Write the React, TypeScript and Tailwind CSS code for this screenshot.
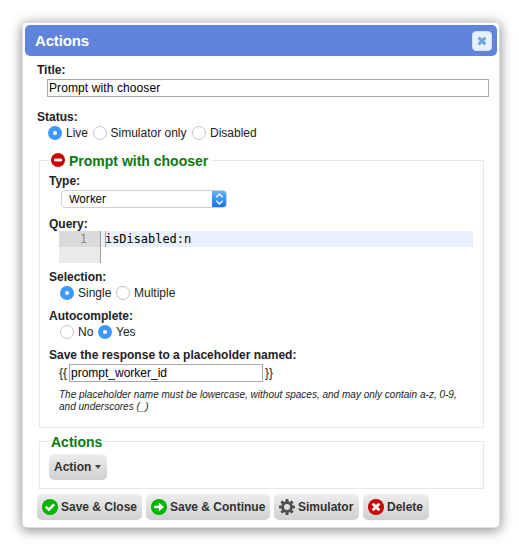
import React from "react";

function Radio({ label, checked = false, className = "" }: { label: string; checked?: boolean; className?: string }) {
  return (
    <label className={`flex h-4 items-center ${className}`}>
      <span
        className={
          checked
            ? "flex size-[14px] shrink-0 items-center justify-center rounded-full bg-[#3b99fc]"
            : "size-[14px] shrink-0 rounded-full border border-[#c4c4c4] bg-white"
        }
      >
        {checked && <span className="size-1 rounded-full bg-white" />}
      </span>
      <span className="ml-[4px]">{label}</span>
    </label>
  );
}

function Label({ children }: { children: React.ReactNode }) {
  return <div className="h-4 font-bold text-[#222]">{children}</div>;
}

function Button({ icon, children, className }: { icon?: React.ReactNode; children: React.ReactNode; className: string }) {
  return (
    <button
      className={`flex h-[26px] shrink-0 items-center rounded-[5px] bg-linear-to-b from-[#ededed] to-[#d0d0d0] pl-[5px] font-bold text-[#333] ${className}`}
    >
      {icon}
      {children}
    </button>
  );
}

const teeth = [0, 45, 90, 135, 180, 225, 270, 315];

function CheckIcon() {
  return (
    <svg className="mr-[3px] size-4 shrink-0" viewBox="0 0 16 16" fill="none">
      <circle cx="8" cy="8" r="8" fill="#00b400" />
      <path d="M3.7 7.7 6.9 10.7l5.3-5.4" stroke="white" strokeWidth="2.5" />
    </svg>
  );
}

function ArrowIcon() {
  return (
    <svg className="mr-[3px] size-4 shrink-0" viewBox="0 0 16 16">
      <circle cx="8" cy="8" r="8" fill="#00b400" />
      <path d="M3.2 6.7H7.8V3.5L13 8l-5.2 4.5V9.3H3.2z" fill="white" />
    </svg>
  );
}

function GearIcon() {
  return (
    <svg className="mr-[3px] size-4 shrink-0" viewBox="0 0 16 16">
      {teeth.map((a) => (
        <path key={a} d="M6.7 0h2.6l.5 3.5H6.2z" fill="#505050" transform={`rotate(${a} 8 8)`} />
      ))}
      <circle cx="8" cy="8" r="4.4" fill="none" stroke="#505050" strokeWidth="2.6" />
    </svg>
  );
}

function DeleteIcon() {
  return (
    <svg className="mr-[3px] size-4 shrink-0" viewBox="0 0 16 16">
      <circle cx="8" cy="8" r="8" fill="#cc0000" />
      <path d="m4.7 4.7 6.6 6.6m0-6.6-6.6 6.6" stroke="white" strokeWidth="2.8" />
    </svg>
  );
}

export default function App() {
  return (
    <div className="h-[553px] w-[519px] overflow-hidden bg-white pl-[23px] pt-[23px] font-['Liberation_Sans',Arial,sans-serif] text-[12px] leading-4 whitespace-nowrap text-[#222]">
      <div className="h-[504px] w-[476px] rounded-[4px] bg-white p-[2px] shadow-[0_0_0_1px_#dedede,0_2px_12px_2px_rgba(0,0,0,0.42)]">
        <header className="flex h-[31px] items-center justify-between rounded-[5px] bg-[#6083dc] pr-[5px] pl-[10px]">
          <h1 className="mt-[1px] text-[15px] font-bold tracking-[-0.15px] text-white">Actions</h1>
          <button className="flex size-[20px] items-center justify-center rounded-[4px] border border-[#cfe0fa] bg-[#e7f1fd]">
            <svg className="size-[10px]" viewBox="0 0 10 10">
              <path d="m1.6 1.6 6.8 6.8m0-6.8-6.8 6.8" stroke="#71a7d8" strokeWidth="2.9" />
            </svg>
          </button>
        </header>

        <div className="px-3 pt-[6px]">
          <Label>Title:</Label>
          <div className="mt-[1px] ml-[10px] flex h-[18px] w-[442px] items-center border border-[#a9a9a9] pl-px text-black">
            <span className="tracking-[0.1px]">Prompt with chooser</span>
          </div>
          <div className="mt-[12px]">
            <Label>Status:</Label>
          </div>
          <div className="flex pl-[11px]">
            <Radio label="Live" checked className="w-[44.5px]" />
            <Radio label="Simulator only" className="w-[99.5px]" />
            <Radio label="Disabled" />
          </div>

          <section className="mt-[19px] ml-[2px] h-[268px] w-[445px] border border-[#e8e8e8] pl-[9px]">
            <h2 className="-mt-[9px] flex h-4 w-[162px] items-center bg-white pl-[2px] text-[14px] font-bold text-[#0b7a0b]">
              <svg className="mr-[4px] size-[14px] shrink-0" viewBox="0 0 14 14">
                <circle cx="7" cy="7" r="7" fill="#cc0000" />
                <path d="M3 5.6h8v2.8H3z" fill="white" />
              </svg>
              <span className="pt-[2px]">Prompt with chooser</span>
            </h2>
            <div className="mt-[5px]">
              <Label>Type:</Label>
            </div>
            <div className="mt-[1px] ml-[12px] flex h-[18px] w-[166px] items-center justify-between overflow-hidden rounded-[4px] border border-[#d0d0d0] bg-white">
              <span className="pl-[7px] font-[Inter,sans-serif] text-[11px] tracking-[-0.1px] text-black">Worker</span>
              <svg className="-mr-px h-[18px] w-[15px] shrink-0" viewBox="0 0 15 18" fill="none">
                <defs>
                  <linearGradient id="selectBlue" x2="0" y2="1">
                    <stop stopColor="#6cb3fa" />
                    <stop offset="1" stopColor="#0a70ff" />
                  </linearGradient>
                </defs>
                <path d="M0 0h15v18H0z" fill="url(#selectBlue)" />
                <path d="m4.4 7.2 3.1-3.2 3.1 3.2M4.4 10.8l3.1 3.2 3.1-3.2" stroke="white" strokeWidth="1.4" />
              </svg>
            </div>
            <div className="mt-[8px]">
              <Label>Query:</Label>
            </div>
            <div className="-mt-px ml-[10px] flex h-8 w-[414px] font-['DejaVu_Sans_Mono',monospace] text-[12px]">
              <div className="w-[42px] border-r border-[#9f9f9f] bg-[#ebebeb] text-[#888]">
                <div className="h-4 bg-[#dadada] pr-[13px] text-right">1</div>
              </div>
              <div className="h-4 flex-1 bg-[#e7f1fe] pl-[4px] text-black">
                <div className="h-4 border-l border-[#aaa] tracking-[-0.05px]">
                  <span className="-ml-px">isDisabled:n</span>
                </div>
              </div>
            </div>
            <div className="mt-[6px]">
              <Label>Selection:</Label>
            </div>
            <div className="flex pl-[11px]">
              <Radio label="Single" checked className="w-[56px]" />
              <Radio label="Multiple" />
            </div>
            <div className="mt-[7px]">
              <Label>Autocomplete:</Label>
            </div>
            <div className="flex pl-[11px]">
              <Radio label="No" className="w-[38px]" />
              <Radio label="Yes" checked />
            </div>
            <div className="mt-[7px]">
              <Label>Save the response to a placeholder named:</Label>
            </div>
            <div className="mt-px ml-[10px] flex h-[18px] items-center">
              <span className="w-[10px]">{"{{"}</span>
              <span className="flex h-[18px] w-[194px] items-center border border-[#a9a9a9] pl-px text-black">
                prompt_worker_id
              </span>
              <span className="ml-[2px]">{"}}"}</span>
            </div>
            <p className="mt-[7px] ml-[10px] text-[10px] leading-[12px] tracking-[0.01px] italic">
              The placeholder name must be lowercase, without spaces, and may only contain a-z, 0-9,
              <br />
              and underscores (_)
            </p>
          </section>

          <section className="mt-[13px] ml-[2px] h-[48px] w-[445px] border border-[#e8e8e8] pl-[9px]">
            <h2 className="-mt-[8px] h-4 w-[55px] bg-white pl-[2px] text-[14px] font-bold text-[#0b7a0b]">Actions</h2>
            <Button className="mt-[4px] w-[58px]">
              Action
              <span className="ml-[4px] border-x-[3.5px] border-t-[4px] border-x-transparent border-t-[#444]" />
            </Button>
          </section>

          <footer className="mt-[5px] flex gap-[4px]">
            <Button className="w-[105px]" icon={<CheckIcon />}>Save &amp; Close</Button>
            <Button className="w-[124px]" icon={<ArrowIcon />}>Save &amp; Continue</Button>
            <Button className="w-[85px]" icon={<GearIcon />}>Simulator</Button>
            <Button className="w-[66px]" icon={<DeleteIcon />}>Delete</Button>
          </footer>
        </div>
      </div>
    </div>
  );
}
